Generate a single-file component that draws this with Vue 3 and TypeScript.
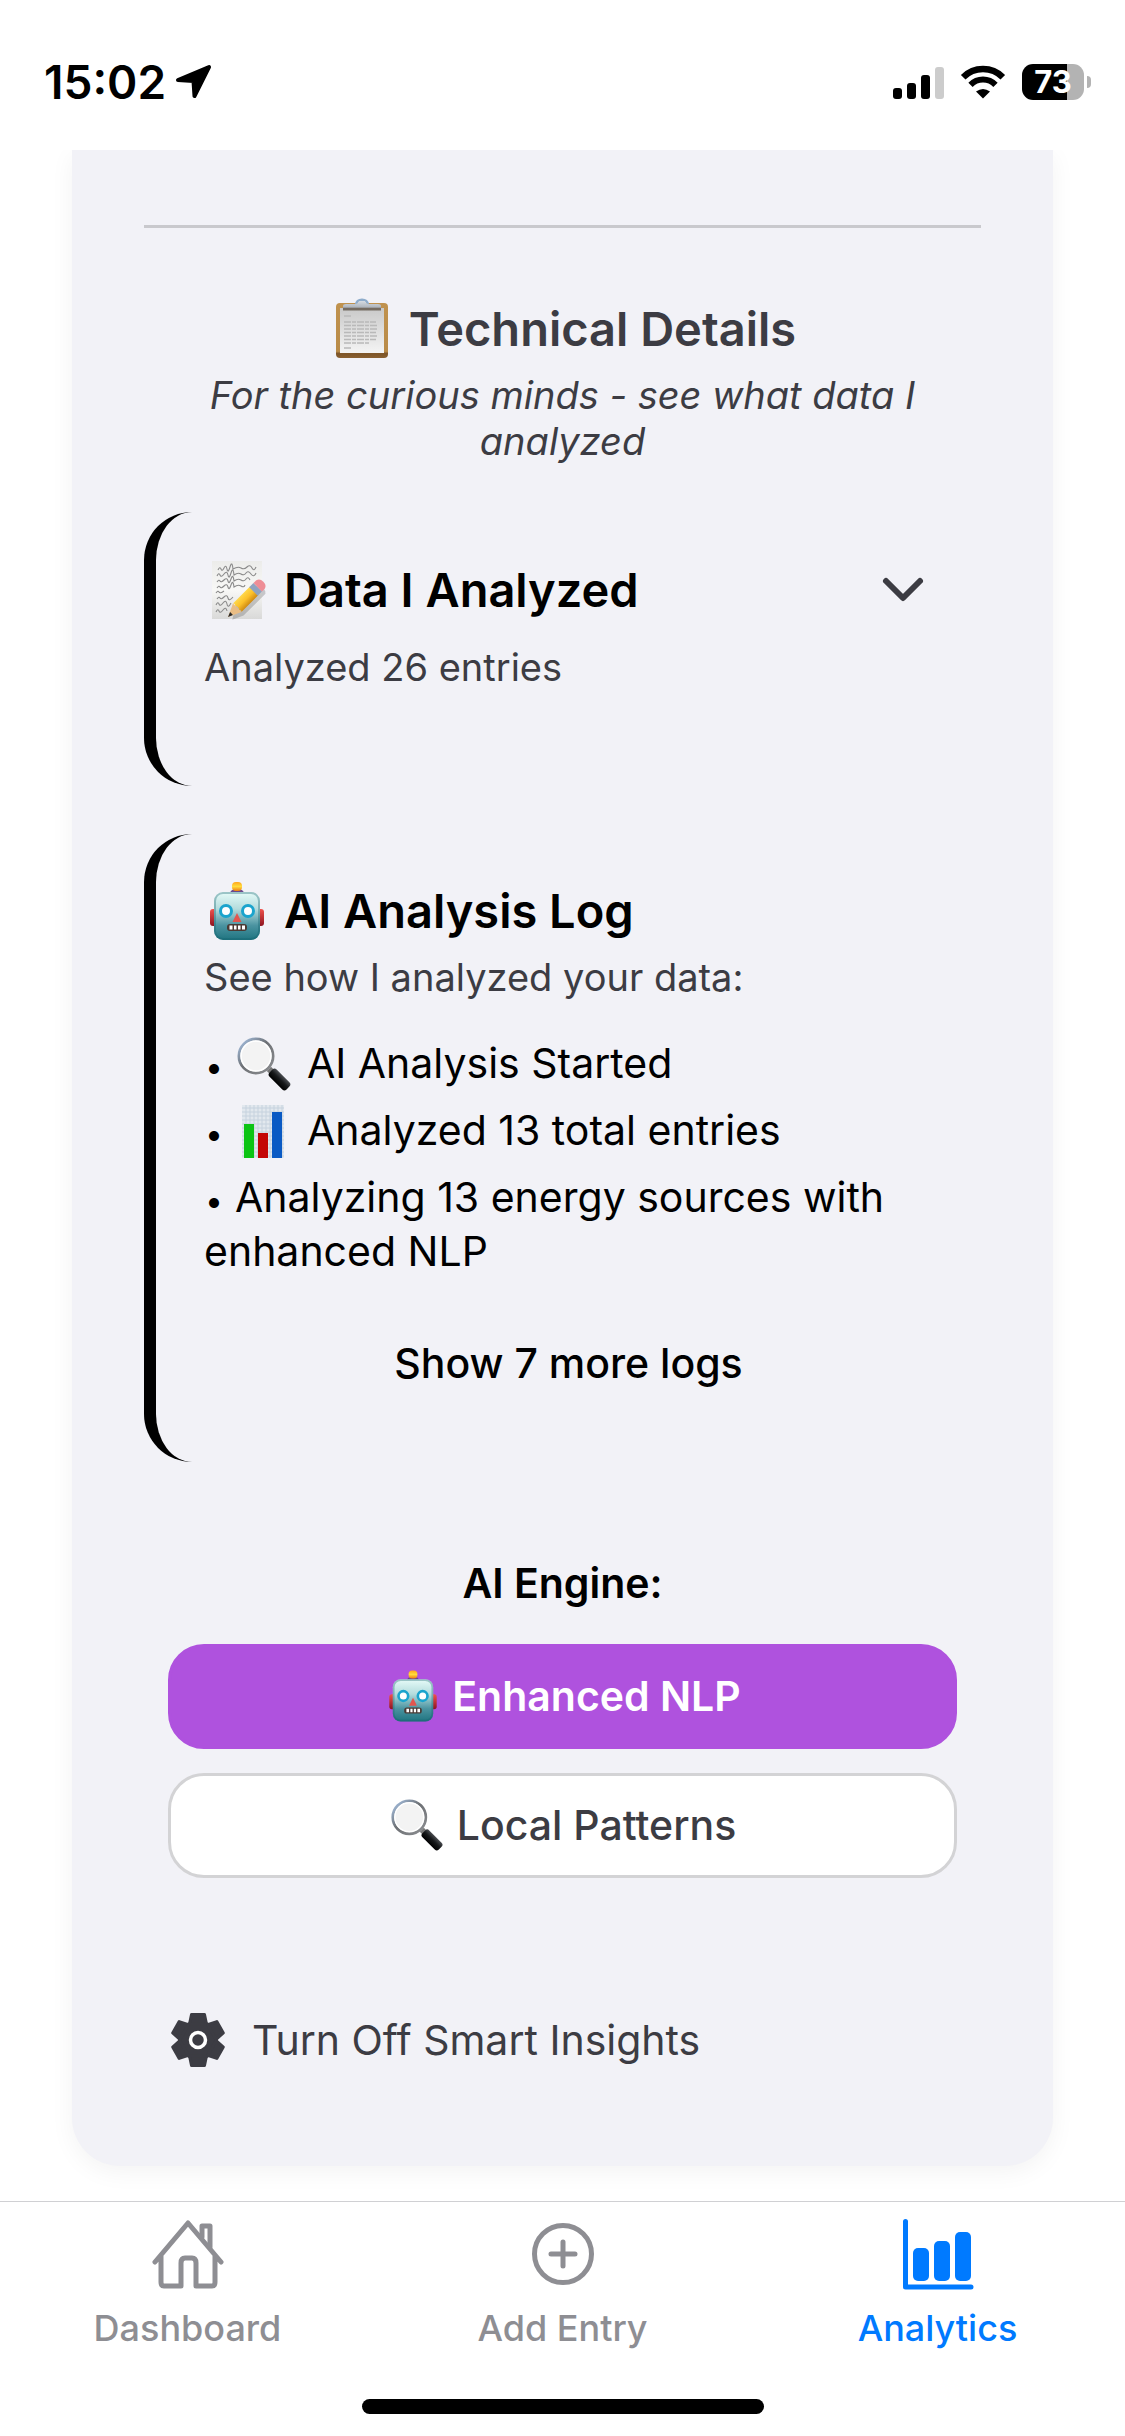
<script setup lang="ts">
import { ref } from 'vue'

type Emoji = 'clipboard' | 'memo' | 'robot' | 'lens' | 'chart'

interface LogLine {
  emoji?: Emoji
  text: string
}

const logs: LogLine[] = [
  { emoji: 'lens', text: 'AI Analysis Started' },
  { emoji: 'chart', text: 'Analyzed 13 total entries' },
  { text: 'Analyzing 13 energy sources with enhanced NLP' },
]

const engine = ref<'nlp' | 'local'>('nlp')
</script>

<template>
  <svg class="sprite" width="0" height="0" aria-hidden="true">
    <defs>
      <linearGradient id="gPaper" x1="0" y1="0" x2="0" y2="1">
        <stop offset="0" stop-color="#c9c9c9" />
        <stop offset="1" stop-color="#f4f4f4" />
      </linearGradient>
      <linearGradient id="gBoard" x1="0" y1="0" x2="0" y2="1">
        <stop offset="0" stop-color="#c0924e" />
        <stop offset="0.88" stop-color="#b98b48" />
        <stop offset="0.92" stop-color="#7c5428" />
        <stop offset="1" stop-color="#8a6030" />
      </linearGradient>
      <linearGradient id="gClip" x1="0" y1="0" x2="0" y2="1">
        <stop offset="0" stop-color="#d5dbe2" />
        <stop offset="0.7" stop-color="#b3b9c0" />
        <stop offset="1" stop-color="#77706a" />
      </linearGradient>
      <linearGradient id="gSheet" x1="0" y1="0" x2="0" y2="1">
        <stop offset="0" stop-color="#ececea" />
        <stop offset="0.5" stop-color="#f8f8f6" />
        <stop offset="1" stop-color="#d9d9d8" />
      </linearGradient>
      <linearGradient id="gPencil" x1="0" y1="0" x2="1" y2="0">
        <stop offset="0" stop-color="#ffd84a" />
        <stop offset="0.5" stop-color="#fbc02a" />
        <stop offset="1" stop-color="#cf8a12" />
      </linearGradient>
      <linearGradient id="gFace" x1="0" y1="0" x2="0" y2="1">
        <stop offset="0" stop-color="#e6fbf8" />
        <stop offset="0.35" stop-color="#b4dcdd" />
        <stop offset="0.7" stop-color="#4a93a0" />
        <stop offset="1" stop-color="#1f7480" />
      </linearGradient>
      <linearGradient id="gEar" x1="0" y1="0" x2="0" y2="1">
        <stop offset="0" stop-color="#f0524c" />
        <stop offset="1" stop-color="#8e1420" />
      </linearGradient>
      <linearGradient id="gBulb" x1="0" y1="0" x2="0" y2="1">
        <stop offset="0" stop-color="#ffa61c" />
        <stop offset="0.5" stop-color="#ffdc3c" />
        <stop offset="1" stop-color="#ef7d12" />
      </linearGradient>
      <linearGradient id="gRim" x1="0" y1="0" x2="1" y2="1">
        <stop offset="0" stop-color="#a9c6ea" />
        <stop offset="0.45" stop-color="#6d7074" />
        <stop offset="1" stop-color="#8d8f92" />
      </linearGradient>
      <linearGradient id="gHandle" x1="0" y1="0" x2="0" y2="1">
        <stop offset="0" stop-color="#4b4e52" />
        <stop offset="0.45" stop-color="#17191b" />
        <stop offset="1" stop-color="#000" />
      </linearGradient>
    </defs>

    <symbol id="clipboard" viewBox="0 0 66 66">
      <rect x="7" y="7" width="52" height="55" rx="4" fill="url(#gBoard)" />
      <rect x="11" y="12" width="44" height="45" fill="url(#gPaper)" />
      <g stroke="#b9b9b9" stroke-width="1.4" stroke-dasharray="7 1 4 1">
        <path d="M15 20h7M15 26h32M15 29.500h34M15 33h33M15 36.500h32M15 40h34M15 43.500h32M15 47h25M15 52h8" />
      </g>
      <path d="M27 9c1-7 11-7 12 0" fill="none" stroke="#8eaccb" stroke-width="2.500" />
      <path d="M14 13v-3q0-2 3-2h9q3 0 4-3h6q1 3 4 3h9q3 0 3 2v3z" fill="url(#gClip)" />
      <rect x="14" y="12" width="38" height="2.500" fill="#756c62" />
    </symbol>

    <symbol id="memo" viewBox="0 0 66 66">
      <rect x="8" y="4" width="50" height="58" fill="url(#gSheet)" />
      <g fill="none" stroke="#8a8a8a" stroke-width="1.100">
        <path d="M14 13q2-4 3-1t3-1 3 1 3-2 3 2q5-3 8-1t6-1 5 1 4-1" />
        <path d="M13 19q2-4 3-1t4-1 4 1 3-2 3 2q4-3 7-1t5-1 5 1 5-1" />
        <path d="M13 25q2-3 3-1t4-1 4 1 3-2 3 2q4-3 7-1t5-1 4 1" />
        <path d="M13 31q2-3 3-1t4-1 4 1 3-2 3 2q4-3 7-1t4-1" />
        <path d="M12 36q2-3 3-1t5-1M13 42q2-3 3-1t4-1 4 1 5-1M12 48q2-4 3-1t4-1 4 1 4-1M12 55q2-4 3-1t4-1 4 1" />
      </g>
      <g transform="translate(24 60) rotate(45)">
        <path d="M2 -3L7 -14L7 -45Q2 -50 -5 -45L-5 -14Z" fill="#000" opacity="0.180" transform="translate(3 2)" />
        <path d="M0 0L-6 -13H6Z" fill="#e9bd85" />
        <path d="M0 0L-2 -5H2Z" fill="#2b2b2b" />
        <path d="M-6 -13q1.500 -2 3 0q3 -2 6 0q1.500 -2 3 0V-37H-6z" fill="url(#gPencil)" />
        <rect x="-6" y="-42" width="12" height="6" fill="#8fa3c0" />
        <path d="M-6 -42V-46Q-5 -50 0 -50Q5 -50 6 -46V-42Z" fill="#ee8d96" />
      </g>
    </symbol>

    <symbol id="robot" viewBox="0 0 66 66">
      <rect x="6" y="31" width="7" height="17" rx="3" fill="url(#gEar)" />
      <rect x="53" y="31" width="7" height="17" rx="3" fill="url(#gEar)" />
      <path d="M26 16q0-5 7-5t7 5z" fill="#6a4a8e" />
      <rect x="28" y="4" width="10" height="9" rx="4" fill="url(#gBulb)" />
      <rect x="10" y="14" width="46" height="48" rx="9" fill="url(#gFace)" />
      <rect x="11" y="15" width="44" height="46" rx="8" fill="none" stroke="#14606c" stroke-opacity="0.350" stroke-width="2" />
      <circle cx="22" cy="33" r="5.500" fill="#fff" stroke="#1ba4cd" stroke-width="3" />
      <circle cx="44" cy="33" r="5.500" fill="#fff" stroke="#1ba4cd" stroke-width="3" />
      <path d="M33 35L37.500 44H28.500Z" fill="#e2564f" />
      <rect x="23" y="46" width="20" height="7" rx="3" fill="#4a3a34" />
      <path d="M25.500 47.500h3v4h-3zM30 47.500h2.500v4H30zM34 47.500h2.500v4H34zM38 47.500h3v4h-3z" fill="#fff" />
    </symbol>

    <symbol id="lens" viewBox="0 0 60 60">
      <g transform="translate(36 37) rotate(45)">
        <rect x="-3" y="-3" width="6" height="6" fill="#777" />
        <rect x="0" y="-5" width="24" height="10" rx="3" fill="url(#gHandle)" />
      </g>
      <circle cx="21" cy="22" r="18" fill="#f3f3f3" />
      <circle cx="21" cy="22" r="17" fill="none" stroke="url(#gRim)" stroke-width="3" />
      <circle cx="21" cy="22" r="15" fill="none" stroke="#fff" stroke-width="1.500" />
    </symbol>

    <symbol id="chart" viewBox="0 0 60 60">
      <rect x="7" y="4" width="42" height="53" fill="#e2e8ee" />
      <path
        d="M11 4v53M15 4v53M19 4v53M23 4v53M27 4v53M31 4v53M35 4v53M39 4v53M43 4v53M47 4v53M7 7h42M7 11h42M7 15h42M7 19h42M7 23h42M7 27h42M7 31h42M7 35h42M7 39h42M7 43h42M7 47h42M7 51h42M7 55h42"
        stroke="#c6d2de" stroke-width="1"
      />
      <rect x="9" y="23" width="10" height="34" fill="#0cc414" />
      <rect x="23" y="32" width="10" height="25" fill="#c40606" />
      <rect x="37" y="11" width="10" height="46" fill="#0a5ac4" />
    </symbol>
  </svg>

  <div class="app">
    <header class="status">
      <div class="status-left">
        <time>15:02</time>
        <svg width="36" height="36" viewBox="0 0 36 36" aria-label="Location in use">
          <path d="M33 3L18.500 32L17.500 17L2 16Z" stroke="#000" stroke-width="4" stroke-linejoin="round" />
        </svg>
      </div>
      <div class="status-right">
        <svg class="signal" width="51" height="33" viewBox="0 0 51 33" aria-label="Signal">
          <rect x="0" y="22" width="9" height="11" rx="3" />
          <rect x="14" y="17" width="9" height="16" rx="3" />
          <rect x="28" y="9" width="9" height="24" rx="3" />
          <rect x="42" y="1" width="9" height="32" rx="3" fill="#ccc" />
        </svg>
        <svg width="46" height="34" viewBox="0 0 46 34" aria-label="Wi-Fi">
          <path d="M3.200 12.200A28 28 0 0 1 42.800 12.200" fill="none" stroke="#000" stroke-width="6.500" />
          <path d="M10.500 19.800A17.500 17.500 0 0 1 35.500 19.800" fill="none" stroke="#000" stroke-width="6" />
          <path d="M23 33.500L16 26.500Q23 21.500 30 26.500Z" />
        </svg>
        <div class="battery">
          <span class="cell">73</span>
          <span class="tip"></span>
        </div>
      </div>
    </header>

    <main class="scroll">
      <section class="card">
        <hr />

        <h2 class="title center">
          <svg class="emoji-lg" aria-hidden="true"><use href="#clipboard" /></svg>
          Technical Details
        </h2>
        <p class="tagline">For the curious minds - see what data I analyzed</p>

        <article class="panel data">
          <button class="toggle" type="button" aria-expanded="false">
            <span class="title">
              <svg class="emoji-lg" aria-hidden="true"><use href="#memo" /></svg>
              Data I Analyzed
            </span>
            <svg class="chevron" viewBox="0 0 60 60" aria-hidden="true">
              <path d="M13 21L30 38L47 21" />
            </svg>
          </button>
          <p class="note">Analyzed 26 entries</p>
        </article>

        <article class="panel">
          <h3 class="title">
            <svg class="emoji-lg" aria-hidden="true"><use href="#robot" /></svg>
            AI Analysis Log
          </h3>
          <p class="note log-note">See how I analyzed your data:</p>
          <ul class="logs">
            <li v-for="log in logs" :key="log.text">
              <span class="dot">•</span>
              <svg v-if="log.emoji" class="emoji-md" aria-hidden="true"><use :href="'#' + log.emoji" /></svg>
              <span>{{ log.text }}</span>
            </li>
          </ul>
          <button class="more" type="button">Show 7 more logs</button>
        </article>

        <div class="engine">
          <h3>AI Engine:</h3>
          <button type="button" :class="{ active: engine === 'nlp' }" @click="engine = 'nlp'">
            <svg class="emoji-sm" aria-hidden="true"><use href="#robot" /></svg>
            Enhanced NLP
          </button>
          <button type="button" :class="{ active: engine === 'local' }" @click="engine = 'local'">
            <svg class="emoji-sm" aria-hidden="true"><use href="#lens" /></svg>
            Local Patterns
          </button>
        </div>

        <button class="turn-off" type="button">
          <svg width="60" height="60" viewBox="-30 -30 60 60" aria-hidden="true">
            <g fill="#3c3c43" stroke="#3c3c43" stroke-width="3" stroke-linejoin="round">
              <circle r="18.500" />
              <path
                v-for="angle in [0, 60, 120, 180, 240, 300]"
                :key="angle"
                :transform="`rotate(${angle})`"
                d="M-6.500 -25.500H6.500L8.500 -16H-8.500Z"
              />
            </g>
            <circle r="7.500" fill="none" stroke="#fff" stroke-width="3.500" />
          </svg>
          Turn Off Smart Insights
        </button>
      </section>
    </main>

    <footer class="dock">
      <nav>
        <a href="#dashboard">
          <svg viewBox="0 0 72 72" aria-hidden="true">
            <path d="M3 44L36 5L69 44M9 38V64Q9 68 12 68H29V45Q29 40 33 40H40Q44 40 44 45V68H60Q63 68 63 64V38" />
            <path d="M50 19V8H58V29" />
          </svg>
          Dashboard
        </a>
        <a href="#add">
          <svg viewBox="0 0 72 72" aria-hidden="true">
            <circle cx="36" cy="36" r="28.500" />
            <path d="M36 24V48M24 36H48" />
          </svg>
          Add Entry
        </a>
        <a class="current" href="#analytics" aria-current="page">
          <svg viewBox="0 0 72 72" aria-hidden="true">
            <path d="M3.500 3.500V69H69" />
            <g fill="currentColor" stroke="none">
              <rect x="11" y="30" width="16" height="33" rx="5" />
              <rect x="32" y="23" width="16" height="40" rx="5" />
              <rect x="53" y="14" width="16" height="49" rx="5" />
            </g>
          </svg>
          Analytics
        </a>
      </nav>
      <div class="home-bar"></div>
    </footer>
  </div>
</template>

<style>
body {
  background: #fff;
}
</style>

<style scoped>
.sprite {
  position: absolute;
}

.app {
  display: flex;
  flex-direction: column;
  min-height: 100vh;
  color: #000;
  font-family: Inter, "Liberation Sans", sans-serif;
}

h2,
h3,
p,
ul {
  margin: 0;
  padding: 0;
}

button {
  margin: 0;
  padding: 0;
  border: 0;
  background: none;
  color: inherit;
  font: inherit;
}

svg {
  flex: none;
}

/* Status bar */
.status {
  display: flex;
  justify-content: space-between;
  align-items: center;
  height: 136px;
  padding: 14px 34px 0 44px;
  box-sizing: content-box;
}

.status-left,
.status-right {
  display: flex;
  align-items: center;
}

.status-left {
  gap: 10px;
  font-size: 46px;
  font-weight: 600;
}

.status-right {
  gap: 16px;
}

.battery {
  display: flex;
  align-items: center;
  gap: 3px;
}

.cell {
  width: 62px;
  border-radius: 11px;
  background: linear-gradient(90deg, #000 73%, #b3b3b3 73%);
  color: #fff;
  font-size: 31px;
  font-weight: 700;
  line-height: 36px;
  text-align: center;
}

.tip {
  width: 4px;
  height: 12px;
  border-radius: 0 6px 6px 0;
  background: #b3b3b3;
}

/* Card */
.scroll {
  flex: 1;
  padding: 0 72px 35px;
  overflow: hidden;
}

.card {
  padding: 75px 72px 72px;
  border-radius: 0 0 48px 48px;
  background: #f2f2f7;
  box-shadow: 0 6px 24px rgba(0, 0, 0, 0.05);
}

hr {
  height: 3px;
  margin: 0 0 72px;
  border: 0;
  background: #c9c9cd;
}

.title {
  display: flex;
  align-items: center;
  gap: 14px;
  font-size: 47px;
  font-weight: 600;
  line-height: 58px;
}

.title.center {
  justify-content: center;
  color: #3c3c43;
}

.emoji-lg {
  width: 66px;
  height: 66px;
  margin: -4px 0;
}

.emoji-md {
  width: 60px;
  height: 60px;
  margin: -9px 12px -3px 0;
  vertical-align: middle;
}

.emoji-sm {
  width: 58px;
  height: 58px;
}

.tagline {
  margin: 14px 0 48px;
  color: #3c3c43;
  font-size: 38px;
  font-style: italic;
  line-height: 46px;
  text-align: center;
}

.panel {
  padding: 48px;
  border-left: 12px solid #000;
  border-radius: 48px;
}

.data {
  margin-bottom: 48px;
  padding-bottom: 96px;
}

.toggle {
  display: flex;
  justify-content: space-between;
  align-items: center;
  width: 100%;
  height: 60px;
  margin-bottom: 24px;
}

.chevron {
  width: 60px;
  height: 60px;
  fill: none;
  stroke: #3c3c43;
  stroke-width: 6;
  stroke-linecap: round;
  stroke-linejoin: round;
}

.note {
  color: #3c3c43;
  font-size: 38px;
  line-height: 46px;
}

.log-note {
  margin: 14px 0 36px;
}

.logs {
  display: flex;
  flex-direction: column;
  gap: 12px;
  font-size: 41px;
  line-height: 54px;
  list-style: none;
}

.dot {
  display: inline-block;
  width: 20px;
  margin-right: 11px;
  font-size: 32px;
  line-height: 32px;
  text-align: center;
}

.more {
  display: block;
  width: 100%;
  margin-top: 34px;
  padding: 24px 0;
  font-size: 41px;
  font-weight: 500;
  line-height: 54px;
}

.engine {
  display: flex;
  flex-direction: column;
  gap: 24px;
  margin-top: 96px;
  padding: 0 24px;
}

.engine h3 {
  margin-bottom: 12px;
  font-size: 41px;
  font-weight: 600;
  line-height: 50px;
  text-align: center;
}

.engine button {
  display: flex;
  justify-content: center;
  align-items: center;
  gap: 10px;
  height: 105px;
  border: 3px solid #d3d3d5;
  border-radius: 36px;
  background: #fff;
  color: #3c3c43;
  font-size: 41px;
  font-weight: 500;
}

.engine button.active {
  border-color: #af52de;
  background: #af52de;
  color: #fff;
  font-weight: 600;
}

.turn-off {
  display: flex;
  align-items: center;
  gap: 24px;
  margin-top: 108px;
  padding: 24px;
  color: #3c3c43;
  font-size: 41px;
  line-height: 60px;
}

/* Tab bar */
.dock {
  display: flex;
  flex-direction: column;
  justify-content: space-between;
  align-items: center;
  height: 212px;
  padding: 0 0 24px;
  border-top: 1px solid #d0d0d3;
}

nav {
  display: flex;
  align-self: stretch;
}

nav a {
  display: flex;
  flex: 1;
  flex-direction: column;
  align-items: center;
  gap: 16px;
  padding-top: 16px;
  color: #8e8e93;
  font-size: 36px;
  font-weight: 500;
  line-height: 44px;
  text-decoration: none;
}

nav svg {
  width: 72px;
  height: 72px;
  fill: none;
  stroke: currentColor;
  stroke-width: 5;
  stroke-linecap: round;
  stroke-linejoin: round;
}

nav .current {
  color: #007aff;
}

.home-bar {
  width: 402px;
  height: 15px;
  border-radius: 8px;
  background: #000;
}
</style>
